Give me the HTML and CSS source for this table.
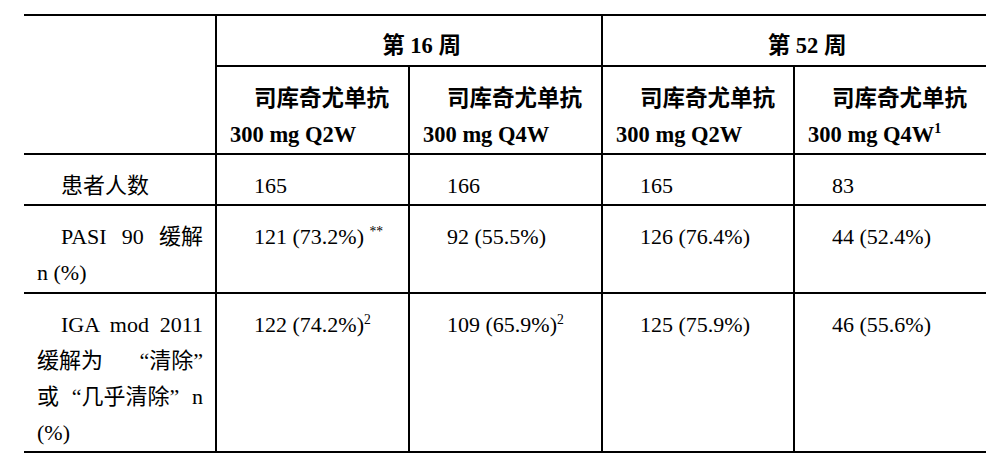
FILE: index.html
```html
<!DOCTYPE html>
<html lang="zh">
<head>
<meta charset="utf-8">
<title>司库奇尤单抗</title>
<link rel="stylesheet" href="styles.css">
</head>
<body>
<div class="page">
  <table class="grid">
    <colgroup>
      <col class="c0"><col class="c1"><col class="c2"><col class="c3"><col class="c4">
    </colgroup>
    <thead>
      <tr class="r1">
        <th class="lead" rowspan="2"></th>
        <th class="wk" colspan="2"><p>第 16 周</p></th>
        <th class="wk" colspan="2"><p>第 52 周</p></th>
      </tr>
      <tr class="r2">
        <th class="dose"><p class="ind">司库奇尤单抗</p><p>300 mg Q2W</p></th>
        <th class="dose"><p class="ind">司库奇尤单抗</p><p>300 mg Q4W</p></th>
        <th class="dose"><p class="ind">司库奇尤单抗</p><p>300 mg Q2W</p></th>
        <th class="dose"><p class="ind">司库奇尤单抗</p><p>300 mg Q4W<sup>1</sup></p></th>
      </tr>
    </thead>
    <tbody>
      <tr class="r3">
        <td class="lead"><p class="ind">患者人数</p></td>
        <td><p class="ind">165</p></td>
        <td><p class="ind">166</p></td>
        <td><p class="ind">165</p></td>
        <td><p class="ind">83</p></td>
      </tr>
      <tr class="r4">
        <td class="lead"><p class="ind just">PASI 90 <span class="w">缓解</span></p><p>n (%)</p></td>
        <td><p class="ind">121 (73.2%) <sup>**</sup></p></td>
        <td><p class="ind">92 (55.5%)</p></td>
        <td><p class="ind">126 (76.4%)</p></td>
        <td><p class="ind">44 (52.4%)</p></td>
      </tr>
      <tr class="r5">
        <td class="lead"><p class="ind just">IGA mod 2011</p><p class="just"><span class="w">缓解为</span> <span class="w">“清除”</span></p><p class="just"><span class="w">或</span> <span class="w">“几乎清除”</span> <span class="w">n</span></p><p>(%)</p></td>
        <td><p class="ind">122 (74.2%)<sup>2</sup></p></td>
        <td><p class="ind">109 (65.9%)<sup>2</sup></p></td>
        <td><p class="ind">125 (75.9%)</p></td>
        <td><p class="ind">46 (55.6%)</p></td>
      </tr>
    </tbody>
  </table>
</div>
</body>
</html>
```

FILE: styles.css
```css
html, body {
  margin: 0;
  padding: 0;
  background: #ffffff;
}

body {
  margin: 8px;
  font-family: "Liberation Serif", "Noto Sans CJK SC", serif;
  color: #000000;
}

.page {
  padding: 6px 0 0 16px;
}

.grid {
  table-layout: fixed;
  width: 962px;
  border-collapse: separate;
  border-spacing: 0;
  border-top: 2px solid #000;
}

.c0 { width: 191px; }
.c1 { width: 193px; }
.c2 { width: 193px; }
.c3 { width: 192px; }
.c4 { width: 193px; }

.grid th,
.grid td {
  box-sizing: border-box;
  vertical-align: top;
  text-align: left;
  padding: 13px 12px 0 13px;
  border-bottom: 2px solid #000;
  border-left: 2px solid #000;
  font-size: 22px;
  line-height: 36px;
  font-weight: normal;
}

.grid .lead {
  border-left: none;
}

.grid th {
  font-weight: bold;
  font-size: 22.5px;
  padding-top: 14px;
}

.grid th.wk {
  padding-top: 12px;
  text-align: center;
}

.grid p {
  margin: 0;
  white-space: nowrap;
}

.grid .ind {
  text-indent: 24px;
}

.grid .just {
  text-align: justify;
  text-align-last: justify;
  white-space: normal;
}

.grid .w {
  display: inline-block;
  text-indent: 0;
  white-space: nowrap;
}

.grid .wk p {
  text-indent: 24px;
}

.r1 > * { height: 51px; }
.r2 > * { height: 87px; }
.r3 > * { height: 50px; }
.r4 > * { height: 88px; }
.r5 > * { height: 159px; }

sup {
  font-size: 0.62em;
  line-height: 0;
  vertical-align: 0.62em;
}
```
